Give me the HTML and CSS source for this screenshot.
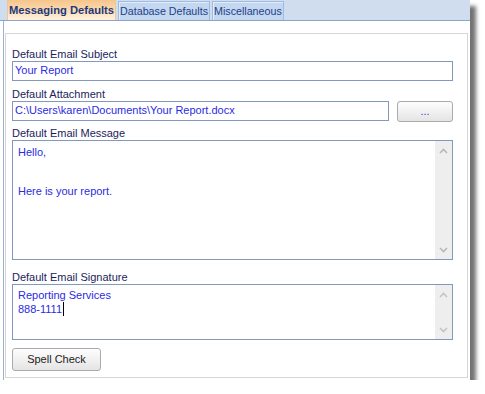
FILE: index.html
```html
<!DOCTYPE html>
<html lang="en">
<head>
    <meta charset="UTF-8">
    <meta name="viewport" content="width=device-width, initial-scale=1.0">
    <title>Messaging Defaults</title>
    <link rel="stylesheet" href="styles.css">
</head>
<body>
    <div class="window">
        <div class="tabbar">
            <div class="tab active">Messaging Defaults</div>
            <div class="tab">Database Defaults</div>
            <div class="tab">Miscellaneous</div>
        </div>

        <div class="panel">
            <div class="group">
                <div class="label first">Default Email Subject</div>
                <div class="field">Your Report</div>

                <div class="label">Default Attachment</div>
                <div class="row">
                    <div class="field grow">C:\Users\karen\Documents\Your Report.docx</div>
                    <div class="button browse">...</div>
                </div>

                <div class="label tight">Default Email Message</div>
                <div class="memo message">
                    <div class="memo-text">Hello,<br><br><br>Here is your report.</div>
                    <div class="scroll">
                        <svg width="9" height="6" viewBox="0 0 9 6"><polyline points="1,5 4.5,1.5 8,5" fill="none" stroke="#b8b8b8" stroke-width="1.6"/></svg>
                        <svg width="9" height="6" viewBox="0 0 9 6"><polyline points="1,1 4.5,4.5 8,1" fill="none" stroke="#b8b8b8" stroke-width="1.6"/></svg>
                    </div>
                </div>

                <div class="label wide">Default Email Signature</div>
                <div class="memo signature">
                    <div class="memo-text sig">Reporting Services<br>888-1111<span class="caret"></span></div>
                    <div class="scroll">
                        <svg width="9" height="6" viewBox="0 0 9 6"><polyline points="1,5 4.5,1.5 8,5" fill="none" stroke="#c4c4c4" stroke-width="1.6"/></svg>
                        <svg width="9" height="6" viewBox="0 0 9 6"><polyline points="1,1 4.5,4.5 8,1" fill="none" stroke="#c4c4c4" stroke-width="1.6"/></svg>
                    </div>
                </div>

                <div class="button spell">Spell Check</div>
            </div>
        </div>
    </div>
</body>
</html>
```

FILE: styles.css
```css
body {
    margin: 0;
    background: #fff;
    font-family: "Liberation Sans", Arial, sans-serif;
    font-size: 11px;
    line-height: 13px;
}

.window {
    width: 470px;
    height: 380px;
    background: #fff;
    display: flex;
    flex-direction: column;
    box-shadow: 6px 6px 4px #737373;
}

.tabbar {
    height: 20px;
    background: #cfddef;
    border-bottom: 1px solid #8aa5cb;
    display: flex;
    align-items: flex-end;
    padding-left: 7px;
    gap: 2px;
}

.tab {
    height: 18px;
    padding: 0 1px;
    display: flex;
    align-items: center;
    font-size: 10.7px;
    color: #1f3f86;
    background: #c3d7f1;
    border: 1px solid #9ebbe2;
    border-bottom: none;
    box-shadow: inset 1px 1px 0 #e3ecf8;
}

.tab.active {
    height: 20px;
    padding: 0 1px;
    font-weight: bold;
    font-size: 11.2px;
    color: #1d3a78;
    background: linear-gradient(#f6c48b, #fcdcb4 55%, #fff1e0);
    border-color: #e8c9a3;
    box-shadow: none;
}

.panel {
    flex: 1;
    margin-left: 3px;
    border-left: 1px solid #9cb0cf;
    padding: 12px 2px 2px 1px;
    display: flex;
}

.group {
    flex: 1;
    border: 1px solid #d6d6d6;
    padding: 14px 14px 0 6px;
}

.label {
    color: #1c1d5c;
    margin-top: 7px;
}

.label.first {
    margin-top: 0;
}

.label.tight {
    margin-top: 5px;
}

.label.wide {
    margin-top: 11px;
}

.field {
    border: 1px solid #8298bd;
    padding: 2px 2px 3px 2px;
    color: #2b2be2;
    white-space: nowrap;
}

.row {
    display: flex;
    align-items: flex-start;
    gap: 8px;
}

.grow {
    flex: 1;
}

.button {
    display: flex;
    align-items: center;
    justify-content: center;
    border: 1px solid #ababab;
    border-radius: 3px;
    background: linear-gradient(#fdfdfd, #f1f1f1 50%, #e4e4e4);
    color: #222;
}

.browse {
    width: 54px;
    height: 19px;
    color: #5a2fc0;
}

.spell {
    width: 87px;
    height: 21px;
    margin-top: 8px;
}

.memo {
    border: 1px solid #8298bd;
    display: flex;
}

.message {
    height: 118px;
}

.signature {
    height: 54px;
}

.memo-text {
    flex: 1;
    padding: 5px 5px;
    color: #2b2be2;
}

.memo-text.sig {
    padding-top: 3px;
    line-height: 14px;
}

.caret {
    display: inline-block;
    width: 1px;
    height: 14px;
    background: #000;
    vertical-align: top;
    margin-left: 1px;
}

.scroll {
    width: 17px;
    background: #eeeeee;
    display: flex;
    flex-direction: column;
    align-items: center;
    justify-content: space-between;
    padding: 7px 0 6px;
}
```
